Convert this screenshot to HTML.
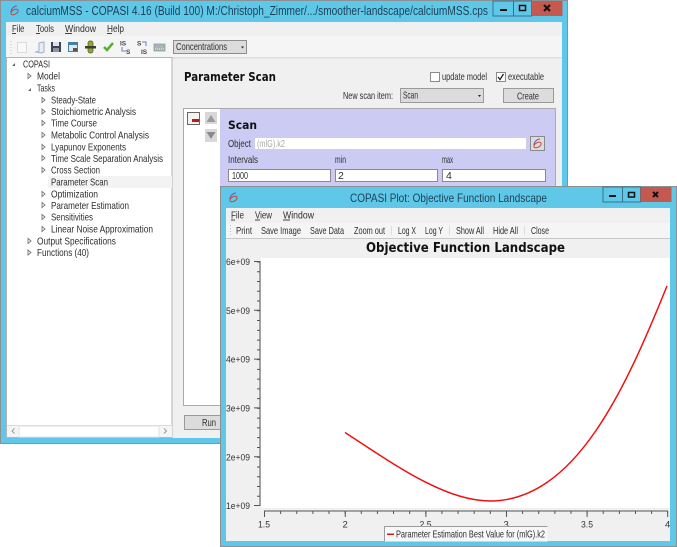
<!DOCTYPE html>
<html><head><meta charset="utf-8"><style>
html,body{margin:0;padding:0;background:#fff;width:677px;height:547px;overflow:hidden}
svg{display:block;filter:blur(.3px)}
text{font-family:"Liberation Sans",sans-serif;font-size:10.5px;fill:#2e2e2e}
.b{font-family:"DejaVu Sans",sans-serif;font-weight:bold;fill:#111}
.d{font-family:"Liberation Sans",sans-serif;font-size:9.5px;fill:#333}
.t{font-size:12.5px;fill:#1d3f55}
</style></head><body>
<svg width="677" height="547" viewBox="0 0 677 547" xmlns="http://www.w3.org/2000/svg">
<!-- main window -->
<rect x="0.5" y="0.5" width="567" height="443" fill="#5fc8e9" stroke="#8b9093"/>
<rect x="6" y="22" width="556" height="416" fill="#f0f0f0"/>
<path d="M17 6c-3 0-6 3-6 6" fill="none" stroke="#6d58a8" stroke-width="1"/>
<ellipse cx="14.500" cy="12" rx="4" ry="2.300" transform="rotate(-30 14.500 12)" fill="none" stroke="#c0483c" stroke-width="1"/>
<text class="t" x="26" y="15" textLength="462" lengthAdjust="spacingAndGlyphs">calciumMSS - COPASI 4.16 (Build 100) M:/Christoph_Zimmer/.../smoother-landscape/calciumMSS.cps</text>
<rect x="493" y="1" width="20.5" height="15" fill="#5fc8e9" stroke="#3b6f88" stroke-width="1"/>
<rect x="513.5" y="1" width="18" height="15" fill="#5fc8e9" stroke="#3b6f88" stroke-width="1"/>
<rect x="531.5" y="1" width="31" height="15" fill="#c5594f"/>
<rect x="500" y="9" width="7" height="2" fill="#111"/>
<rect x="519.5" y="5.5" width="6" height="5" fill="none" stroke="#111" stroke-width="1.5"/>
<path d="M544 5l6 6M550 5l-6 6" stroke="#111" stroke-width="2"/>
<!-- menu -->
<text x="12" y="32" textLength="12.5" lengthAdjust="spacingAndGlyphs">File</text><rect x="12" y="33" width="4" height="1" fill="#444"/>
<text x="36" y="32" textLength="18" lengthAdjust="spacingAndGlyphs">Tools</text><rect x="36" y="33" width="4" height="1" fill="#444"/>
<text x="65" y="32" textLength="31" lengthAdjust="spacingAndGlyphs">Window</text><rect x="65" y="33" width="7" height="1" fill="#444"/>
<text x="107" y="32" textLength="17" lengthAdjust="spacingAndGlyphs">Help</text><rect x="107" y="33" width="5" height="1" fill="#444"/>
<rect x="6" y="36" width="556" height="21" fill="#f5f5f5"/>
<rect x="6" y="57" width="556" height="1.5" fill="#dedede"/>
<!-- toolbar icons -->
<path d="M11 41v14" stroke="#c8c8c8" stroke-dasharray="1 2"/>
<rect x="17.5" y="42.5" width="9" height="10" fill="#f9f9f9" stroke="#dadada"/>
<path d="M36 52l3-1v-8l5-1v10l-3 1z" fill="#e8eef6" stroke="#9fb0c6"/>
<rect x="51" y="42" width="10" height="10" fill="#3d4552"/><rect x="53" y="42" width="6" height="4" fill="#dfe3e8"/><rect x="53" y="48" width="6" height="4" fill="#8d94a0"/>
<rect x="68" y="42" width="10" height="10" fill="#3f7fa8"/><rect x="69" y="45" width="8" height="6" fill="#dfe8ee"/><rect x="73" y="48" width="4" height="3" fill="#555"/>
<rect x="88" y="41" width="5" height="12" rx="2" fill="#8fa83a" stroke="#4d5a1c" stroke-width=".7"/><rect x="85" y="46" width="11" height="2.5" fill="#3d3d30"/>
<path d="M104 47l3 3l6-7" fill="none" stroke="#5cb030" stroke-width="2.5"/>
<text x="120" y="45.5" style="font-size:6.5px;font-weight:bold;fill:#444">IS</text><text x="126" y="54" style="font-size:6.5px;font-weight:bold;fill:#444">S</text><path d="M122 47v4h4" fill="none" stroke="#6a80c8"/>
<text x="137" y="45.5" style="font-size:6.5px;font-weight:bold;fill:#444">S</text><text x="141" y="54" style="font-size:6.5px;font-weight:bold;fill:#444">IS</text><path d="M142 42h4v4" fill="none" stroke="#6a80c8"/>
<rect x="154" y="44" width="11" height="7" fill="#aab4b8" stroke="#8a9599" stroke-width=".7"/><path d="M155 49h9" stroke="#eee" stroke-dasharray="1 1"/>
<rect x="173.5" y="40.5" width="73" height="13" fill="#dcdcdc" stroke="#8d8d8d"/>
<text x="176" y="50" textLength="51" lengthAdjust="spacingAndGlyphs">Concentrations</text>
<path d="M241 46.5h3l-1.5 2z" fill="#222"/>
<!-- tree -->
<rect x="6.5" y="57.5" width="165.5" height="380" fill="#fff" stroke="#b4b4b4"/>
<rect x="48" y="176" width="124" height="12" fill="#f3f3f3"/>
<g>
<path d="M12 66l3-3v3z" fill="#666"/><path d="M28 91l3-3v3z" fill="#666"/>
<g fill="none" stroke="#777" stroke-width=".9">
<path d="M28 73.500l3 2.500l-3 2.500z"/>
<path d="M42 97.500l3 2.500l-3 2.500zM42 109l3 2.500l-3 2.500zM42 120.500l3 2.500l-3 2.500zM42 132.500l3 2.500l-3 2.500zM42 144.500l3 2.500l-3 2.500zM42 155.500l3 2.500l-3 2.500zM42 167.500l3 2.500l-3 2.500zM42 191.500l3 2.500l-3 2.500zM42 202.500l3 2.500l-3 2.500zM42 214.500l3 2.500l-3 2.500zM42 226.500l3 2.500l-3 2.500z"/>
<path d="M28 238.500l3 2.500l-3 2.500zM28 250l3 2.500l-3 2.500z"/>
</g>
<text x="23" y="67.500" textLength="27" lengthAdjust="spacingAndGlyphs">COPASI</text>
<text x="37" y="79.500" textLength="23" lengthAdjust="spacingAndGlyphs">Model</text>
<text x="37" y="91.500" textLength="18" lengthAdjust="spacingAndGlyphs">Tasks</text>
<text x="51" y="103.500" textLength="45" lengthAdjust="spacingAndGlyphs">Steady-State</text>
<text x="51" y="115" textLength="85" lengthAdjust="spacingAndGlyphs">Stoichiometric Analysis</text>
<text x="51" y="126.500" textLength="46" lengthAdjust="spacingAndGlyphs">Time Course</text>
<text x="51" y="138.500" textLength="98" lengthAdjust="spacingAndGlyphs">Metabolic Control Analysis</text>
<text x="51" y="150.500" textLength="75" lengthAdjust="spacingAndGlyphs">Lyapunov Exponents</text>
<text x="51" y="162" textLength="112" lengthAdjust="spacingAndGlyphs">Time Scale Separation Analysis</text>
<text x="51" y="173.500" textLength="49" lengthAdjust="spacingAndGlyphs">Cross Section</text>
<text x="51" y="185.500" textLength="57" lengthAdjust="spacingAndGlyphs">Parameter Scan</text>
<text x="51" y="197.500" textLength="47" lengthAdjust="spacingAndGlyphs">Optimization</text>
<text x="51" y="209" textLength="78" lengthAdjust="spacingAndGlyphs">Parameter Estimation</text>
<text x="51" y="220.500" textLength="42" lengthAdjust="spacingAndGlyphs">Sensitivities</text>
<text x="51" y="232.500" textLength="102" lengthAdjust="spacingAndGlyphs">Linear Noise Approximation</text>
<text x="37" y="244.500" textLength="79" lengthAdjust="spacingAndGlyphs">Output Specifications</text>
<text x="37" y="256" textLength="52" lengthAdjust="spacingAndGlyphs">Functions (40)</text>
</g>
<!-- tree scrollbar -->
<rect x="7" y="425" width="165" height="12" fill="#f5f5f5"/>
<path d="M7 425.500h165" stroke="#dcdcdc"/>
<rect x="19" y="426" width="140" height="11" fill="#fff" stroke="#e2e2e2"/>
<path d="M14.500 428.500l-2.500 2.500l2.500 2.500M164 428.500l2.500 2.500l-2.500 2.500" fill="none" stroke="#999"/>
<!-- right panel -->
<text class="b" x="184" y="81" style="font-size:12px" textLength="92" lengthAdjust="spacingAndGlyphs">Parameter Scan</text>
<rect x="430.500" y="72.500" width="9" height="9" fill="#fff" stroke="#8a8a8a"/>
<text x="442" y="80" textLength="45" lengthAdjust="spacingAndGlyphs">update model</text>
<rect x="496.500" y="72.500" width="9" height="9" fill="#fff" stroke="#8a8a8a"/>
<path d="M498 77l2 2.500l3.500-5.500" fill="none" stroke="#222" stroke-width="1.300"/>
<text x="508" y="80" textLength="36" lengthAdjust="spacingAndGlyphs">executable</text>
<text x="343" y="99" textLength="50" lengthAdjust="spacingAndGlyphs">New scan item:</text>
<rect x="400.500" y="88.500" width="83" height="14" fill="#dcdcdc" stroke="#9a9a9a"/>
<text x="403" y="98.500" textLength="15" lengthAdjust="spacingAndGlyphs">Scan</text>
<path d="M478 95h3l-1.500 2z" fill="#222"/>
<rect x="503.500" y="88.500" width="50" height="14" fill="#dcdcdc" stroke="#9a9a9a"/>
<text x="517" y="99.500" textLength="22" lengthAdjust="spacingAndGlyphs">Create</text>
<!-- scan frame -->
<rect x="183.500" y="108.500" width="372" height="297" fill="#f8f8f8" stroke="#ababab"/>
<rect x="184" y="109" width="36" height="296" fill="#fff"/>
<rect x="220" y="109" width="335" height="90" fill="#cbcbf3"/>
<rect x="187.500" y="112.500" width="12" height="12" fill="#f3f3f3" stroke="#666"/>
<rect x="192" y="119" width="7" height="3" fill="#c01818"/>
<rect x="205" y="112" width="12" height="12" fill="#d8d8d8"/><path d="M206.500 122l4.500-7l4.500 7z" fill="#9a9a9a"/>
<rect x="205" y="129" width="12" height="13" fill="#d8d8d8"/><path d="M206.500 132h9l-4.500 7z" fill="#8a8a8a"/>
<text class="b" x="228" y="129" style="font-size:11.500px" textLength="29" lengthAdjust="spacingAndGlyphs">Scan</text>
<text x="228" y="147" textLength="23" lengthAdjust="spacingAndGlyphs">Object</text>
<rect x="255" y="138" width="271" height="11" fill="#fff"/>
<text x="257" y="147" style="fill:#aaa" textLength="28" lengthAdjust="spacingAndGlyphs">(mlG).k2</text>
<rect x="530.500" y="136.500" width="14" height="14" fill="#dcdcdc" stroke="#8a8a8a"/>
<path d="M540 139c-3 0-6 3-6 6" fill="none" stroke="#6d58a8"/>
<ellipse cx="537.500" cy="145" rx="4" ry="2.300" transform="rotate(-30 537.500 145)" fill="none" stroke="#c0483c"/>
<text x="228" y="163" textLength="30" lengthAdjust="spacingAndGlyphs">Intervals</text>
<text x="335" y="163" textLength="11" lengthAdjust="spacingAndGlyphs">min</text>
<text x="442" y="163" textLength="11" lengthAdjust="spacingAndGlyphs">max</text>
<rect x="228.500" y="169.500" width="102" height="12" fill="#fff" stroke="#8a8a8a"/>
<rect x="335.500" y="169.500" width="102" height="12" fill="#fff" stroke="#8a8a8a"/>
<rect x="442.500" y="169.500" width="103" height="12" fill="#fff" stroke="#8a8a8a"/>
<text x="232" y="179" textLength="16" lengthAdjust="spacingAndGlyphs">1000</text>
<text x="338" y="179">2</text><text x="446" y="179">4</text>
<rect x="184.500" y="415.500" width="50" height="14" fill="#dcdcdc" stroke="#9a9a9a"/>
<text x="202" y="426" textLength="14" lengthAdjust="spacingAndGlyphs">Run</text>
<!-- plot window -->
<rect x="220.500" y="186.500" width="456" height="360" fill="#5fc8e9" stroke="#8b9093"/>
<rect x="226" y="208" width="444" height="333" fill="#f0f0f0"/>
<path d="M236 193c-3 0-6 3-6 6" fill="none" stroke="#6d58a8"/>
<ellipse cx="233.500" cy="199" rx="4" ry="2.300" transform="rotate(-30 233.500 199)" fill="none" stroke="#c0483c"/>
<text class="t" x="350" y="202" style="font-size:12px" textLength="197" lengthAdjust="spacingAndGlyphs">COPASI Plot: Objective Function Landscape</text>
<rect x="603" y="187" width="19.500" height="15" fill="#5fc8e9" stroke="#3b6f88"/>
<rect x="622.500" y="187" width="18" height="15" fill="#5fc8e9" stroke="#3b6f88"/>
<rect x="640.500" y="187" width="31" height="15" fill="#c5594f"/>
<rect x="609" y="195" width="7" height="2" fill="#111"/>
<rect x="628.500" y="192.500" width="6" height="4.500" fill="none" stroke="#111" stroke-width="1.500"/>
<path d="M653 192l5 5M658 192l-5 5" stroke="#111" stroke-width="2"/>
<text x="231" y="218.500" textLength="13" lengthAdjust="spacingAndGlyphs">File</text><rect x="231" y="219.500" width="4" height="1" fill="#444"/>
<text x="255" y="218.500" textLength="17" lengthAdjust="spacingAndGlyphs">View</text><rect x="255" y="219.500" width="5" height="1" fill="#444"/>
<text x="283" y="218.500" textLength="31" lengthAdjust="spacingAndGlyphs">Window</text><rect x="283" y="219.500" width="7" height="1" fill="#444"/>
<rect x="226" y="223" width="444" height="15" fill="#f5f5f5"/>
<rect x="226" y="238" width="444" height="1" fill="#c8c8c8"/>
<path d="M230.500 225v11" stroke="#c4c4c4" stroke-dasharray="1 2"/>
<path d="M391.500 226v9M449.500 226v9M524.500 226v9" stroke="#dcdcdc"/>
<g>
<text x="236" y="234" textLength="16" lengthAdjust="spacingAndGlyphs">Print</text>
<text x="261" y="234" textLength="40" lengthAdjust="spacingAndGlyphs">Save Image</text>
<text x="310" y="234" textLength="34" lengthAdjust="spacingAndGlyphs">Save Data</text>
<text x="354" y="234" textLength="31" lengthAdjust="spacingAndGlyphs">Zoom out</text>
<text x="398" y="234" textLength="18" lengthAdjust="spacingAndGlyphs">Log X</text>
<text x="425" y="234" textLength="18" lengthAdjust="spacingAndGlyphs">Log Y</text>
<text x="456" y="234" textLength="28" lengthAdjust="spacingAndGlyphs">Show All</text>
<text x="493" y="234" textLength="25" lengthAdjust="spacingAndGlyphs">Hide All</text>
<text x="531" y="234" textLength="18" lengthAdjust="spacingAndGlyphs">Close</text>
</g>
<text class="b" x="366" y="252" style="font-size:13px" textLength="199" lengthAdjust="spacingAndGlyphs">Objective Function Landscape</text>
<rect x="261" y="258" width="409" height="250" fill="#fff"/>
<!-- axes -->
<path d="M260 261v245M254 261.500h6M254 310.300h6M254 359.100h6M254 407.900h6M254 456.700h6M254 505.500h6" stroke="#555" fill="none"/>
<path d="M258.500 261.500V505.500" stroke="#555" stroke-width="3" stroke-dasharray="1 8.760" fill="none"/>
<path d="M264 511h404M264.500 511v6M345.300 511v6M425.900 511v6M506.500 511v6M587.100 511v6M667.700 511v6" stroke="#555" fill="none"/>
<path d="M264 512.500H668" stroke="#555" stroke-width="3" stroke-dasharray="1 15.130" fill="none"/>
<g>
<text class="d" x="226" y="265" textLength="24" lengthAdjust="spacingAndGlyphs">6e+09</text>
<text class="d" x="226" y="314" textLength="24" lengthAdjust="spacingAndGlyphs">5e+09</text>
<text class="d" x="226" y="362.500" textLength="24" lengthAdjust="spacingAndGlyphs">4e+09</text>
<text class="d" x="226" y="411.500" textLength="24" lengthAdjust="spacingAndGlyphs">3e+09</text>
<text class="d" x="226" y="460.500" textLength="24" lengthAdjust="spacingAndGlyphs">2e+09</text>
<text class="d" x="226" y="509" textLength="24" lengthAdjust="spacingAndGlyphs">1e+09</text>
<text class="d" x="258" y="527.500" textLength="12" lengthAdjust="spacingAndGlyphs">1.5</text>
<text class="d" x="342.500" y="527.500">2</text>
<text class="d" x="419.500" y="527.500" textLength="12" lengthAdjust="spacingAndGlyphs">2.5</text>
<text class="d" x="503.500" y="527.500">3</text>
<text class="d" x="581" y="527.500" textLength="12" lengthAdjust="spacingAndGlyphs">3.5</text>
<text class="d" x="665" y="527.500">4</text>
</g>
<!-- curve -->
<path fill="none" stroke="#f01010" stroke-width="1.500" d="M345 432.500C395 465 445 501 490 501C575 501 625 390 667 286"/>
<!-- legend -->
<rect x="384.500" y="526.500" width="163" height="15" fill="#f8f8f8"/>
<path d="M384.500 541v-14.500h163" fill="none" stroke="#9c9c9c"/>
<rect x="387" y="533.500" width="7" height="1.500" fill="#f01010"/>
<text x="396" y="537.500" textLength="149" lengthAdjust="spacingAndGlyphs">Parameter Estimation Best Value for (mlG).k2</text>
</svg>
</body></html>
